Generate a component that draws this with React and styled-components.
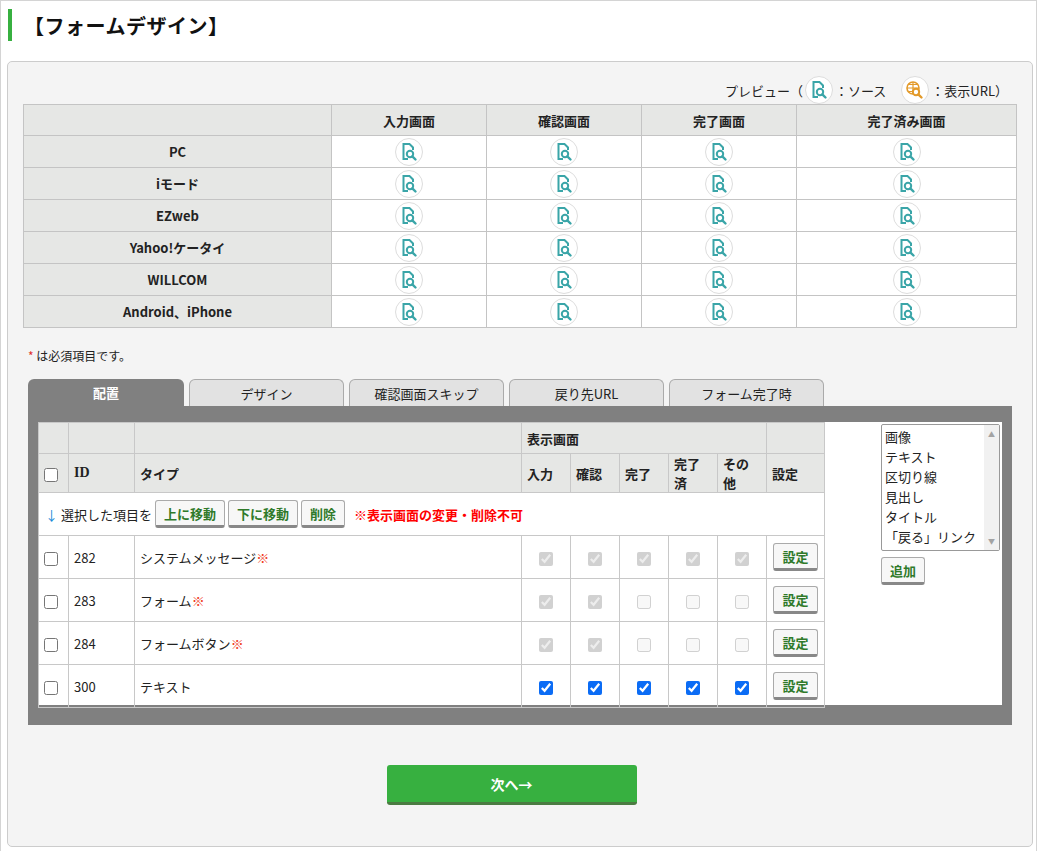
import React from "react";
import styled, { createGlobalStyle } from "styled-components";

const Global = createGlobalStyle`
  html,body{margin:0;padding:0;background:#fff;}
  body{font-family:"Noto Sans CJK JP","Noto Sans",sans-serif;font-size:13px;color:#222;}
`;

const Page = styled.div`
  width:1037px;height:851px;box-sizing:border-box;border:1px solid #d4d4d4;border-bottom:none;
  padding:8px 3px 0 6px;
`;
const Title = styled.h1`
  margin:0 0 20px 1px;border-left:4px solid #37b040;height:32px;display:flex;align-items:center;
  font-size:20px;font-weight:bold;padding-left:12px;color:#111;letter-spacing:0.5px;
`;
const Panel = styled.div`
  background:#f4f4f4;border:1px solid #ccc;border-radius:5px;height:786px;box-sizing:border-box;
  padding:14px 16px 0 15px;
`;
const Legend = styled.div`
  display:flex;justify-content:flex-end;align-items:center;gap:2px;height:28px;padding-right:8px;font-size:13px;
`;
const Grid = styled.table`
  border-collapse:collapse;width:994px;margin-top:0px;background:#fff;
  td,th{border:1px solid #c4c4c4;text-align:center;padding:0;}
`;
const HTh = styled.th`
  background:#e6e7e5;height:30px;font-weight:bold;font-size:13px;width:${p=>p.w}px;
`;
const RowTh = styled.th`
  background:#e6e7e5;height:31px;font-weight:bold;
`;
const Circle = styled.span`
  display:inline-flex;width:26px;height:26px;border:1px solid #ddd;border-radius:50%;background:#fff;
  align-items:center;justify-content:center;vertical-align:middle;
`;
const DocIcon = ({c="#3aa5a8"}) => (
  <Circle>
    <svg width="18" height="20" viewBox="0 0 18 20">
      <path d="M9 2H3.5v15H8" fill="none" stroke={c} strokeWidth="2"/>
      <path d="M8 2h1.5l3.5 3.5V8" fill="none" stroke={c} strokeWidth="2"/>
      <circle cx="10" cy="12" r="3.2" fill="none" stroke={c} strokeWidth="2"/>
      <path d="M12.3 14.3l3.2 3.2" stroke={c} strokeWidth="2.4" strokeLinecap="round"/>
    </svg>
  </Circle>
);
const GlobeIcon = () => {
  const c="#e39a2a";
  return (
    <Circle>
      <svg width="20" height="20" viewBox="0 0 20 20">
        <circle cx="8" cy="8" r="6" fill="none" stroke={c} strokeWidth="1.6"/>
        <path d="M2 8h12M8 2v12M4 4.5h8M4 11.5h8" stroke={c} strokeWidth="1.2"/>
        <circle cx="11" cy="12" r="3.2" fill="#fff" stroke={c} strokeWidth="2"/>
        <path d="M13.3 14.3l3.2 3.2" stroke={c} strokeWidth="2.4" strokeLinecap="round"/>
      </svg>
    </Circle>
  );
};
const Req = styled.div`
  margin:19px 0 0 5px;height:20px;font-size:12px;
  span{color:#e0302a;}
`;
const Tabs = styled.div`
  display:flex;gap:5px;margin:12px 0 0 5px;
`;
const Tab = styled.div`
  width:${p=>p.active?156:155}px;height:27px;box-sizing:border-box;display:flex;align-items:center;justify-content:center;
  border-radius:6px 6px 0 0;font-size:13px;
  ${p=>p.active?"background:#808080;color:#fff;font-weight:bold;":"background:#e2e2e2;border:1px solid #aaa;border-bottom:none;color:#222;"}
`;
const Dark = styled.div`
  background:#808080;margin-left:5px;width:984px;height:319px;box-sizing:border-box;padding:16px 10px 20px 10px;
`;
const White = styled.div`
  background:#fff;height:283px;display:flex;
`;
const List = styled.table`
  border-collapse:collapse;width:787px;height:278px;
  td,th{border:1px solid #c8c8c8;padding:0 5px;text-align:left;}
`;
const Th = styled.th`
  background:#e6e7e5;height:30px;font-weight:bold;font-size:13px;
  ${p=>p.serif?'font-family:"Liberation Serif",serif;font-size:14px;':""}
`;
const Td = styled.td`
  height:42px;font-size:13px;
  ${p=>p.c?"text-align:center !important;":""}
`;
const Box = styled.input.attrs({type:"checkbox"})`
  width:14px;height:14px;margin:0;vertical-align:middle;accent-color:#0b6cf5;
`;
const Btn = styled.button`
  font-family:inherit;font-size:13px;font-weight:bold;color:#2f7a2a;background:#f7f7f7;
  border:1px solid #aaa;border-bottom:3px solid #888;border-radius:3px;height:28px;padding:0 8px;cursor:pointer;
`;
const Actions = styled.div`
  display:flex;align-items:center;gap:3px;padding-left:1px;
  b{color:#f00;margin-left:6px;}
`;
const Arrow = styled.span`color:#1a8cd8;`;
const Side = styled.div`
  margin-left:56px;padding-top:2px;display:flex;flex-direction:column;align-items:flex-start;gap:6px;
`;
const Select = styled.div`
  width:119px;height:127px;box-sizing:border-box;border:1px solid #999;border-radius:2px;display:flex;background:#fff;
`;
const Opts = styled.div`
  flex:1;padding:2px 3px;line-height:20px;font-size:13px;white-space:nowrap;overflow:hidden;
`;
const Scroll = styled.div`
  width:15px;background:#f1f1f1;display:flex;flex-direction:column;justify-content:space-between;align-items:center;
  padding:4px 0;font-size:7px;color:#a3a3a3;
`;
const Next = styled.button`
  display:block;margin:40px auto 0;width:250px;height:40px;background:#37b040;color:#fff;border:none;
  border-bottom:3px solid #4b7b42;border-radius:3px;font-family:inherit;font-size:14px;font-weight:bold;position:relative;left:-8px;
`;

const devices=["PC","iモード","EZweb","Yahoo!ケータイ","WILLCOM","Android、iPhone"];
const rows=[
  {id:282,name:"システムメッセージ",req:true,st:["d","d","d","d","d"]},
  {id:283,name:"フォーム",req:true,st:["d","d","e","e","e"]},
  {id:284,name:"フォームボタン",req:true,st:["d","d","e","e","e"]},
  {id:300,name:"テキスト",req:false,st:["c","c","c","c","c"]},
];
const Mark = styled.span`color:#f03c1e;`;

export default function App(){
  return (<>
    <Global/>
    <Page>
      <Title>【フォームデザイン】</Title>
      <Panel>
        <Legend>プレビュー（<DocIcon/>：ソース　<GlobeIcon/>：表示URL）</Legend>
        <Grid>
          <thead><tr><HTh w={307}></HTh><HTh w={154}>入力画面</HTh><HTh w={154}>確認画面</HTh><HTh w={154}>完了画面</HTh><HTh>完了済み画面</HTh></tr></thead>
          <tbody>
            {devices.map(d=>(
              <tr key={d}><RowTh>{d}</RowTh>{[0,1,2,3].map(i=><td key={i}><DocIcon/></td>)}</tr>
            ))}
          </tbody>
        </Grid>
        <Req><span>*</span> は必須項目です。</Req>
        <Tabs>
          <Tab active>配置</Tab><Tab>デザイン</Tab><Tab>確認画面スキップ</Tab><Tab>戻り先URL</Tab><Tab>フォーム完了時</Tab>
        </Tabs>
        <Dark>
          <White>
            <List>
              <thead>
                <tr><Th style={{width:19}}></Th><Th style={{width:55}}></Th><Th></Th><Th colSpan={5}>表示画面</Th><Th style={{width:47}}></Th></tr>
                <tr><Th><Box/></Th><Th serif>ID</Th><Th>タイプ</Th>
                  {["入力","確認","完了","完了済","その他"].map(h=><Th key={h} style={{width:38}}>{h}</Th>)}<Th>設定</Th></tr>
              </thead>
              <tbody>
                <tr><Td colSpan={9}><Actions><Arrow>↓</Arrow>選択した項目を<Btn>上に移動</Btn><Btn>下に移動</Btn><Btn>削除</Btn><b>※表示画面の変更・削除不可</b></Actions></Td></tr>
                {rows.map(r=>(
                  <tr key={r.id}>
                    <Td><Box/></Td><Td>{r.id}</Td><Td>{r.name}{r.req&&<Mark>※</Mark>}</Td>
                    {r.st.map((s,i)=><Td c key={i}><Box disabled={s!=="c"} defaultChecked={s!=="e"}/></Td>)}
                    <Td c><Btn>設定</Btn></Td>
                  </tr>
                ))}
              </tbody>
            </List>
            <Side>
              <Select><Opts><div>画像</div><div>テキスト</div><div>区切り線</div><div>見出し</div><div>タイトル</div><div>「戻る」リンク</div></Opts><Scroll><span>▲</span><span>▼</span></Scroll></Select>
              <Btn>追加</Btn>
            </Side>
          </White>
        </Dark>
        <Next>次へ→</Next>
      </Panel>
    </Page>
  </>);
}
